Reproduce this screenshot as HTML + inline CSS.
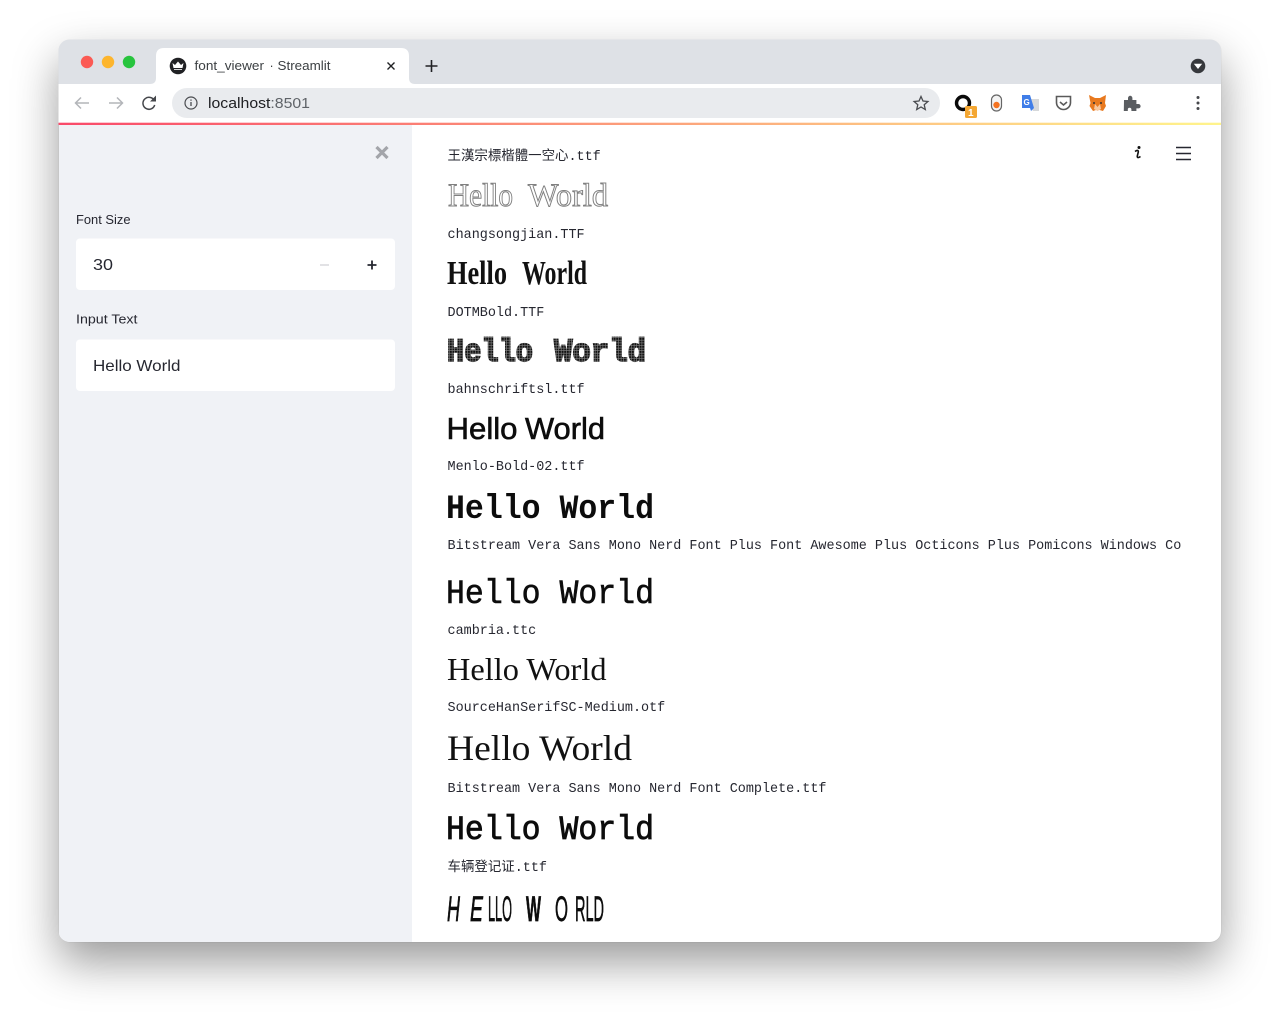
<!DOCTYPE html>
<html><head><meta charset="utf-8"><style>
html,body{margin:0;padding:0;background:#fff;width:1280px;height:1020px;overflow:hidden}
#w{position:absolute;left:58.5px;top:39.5px;width:1162.5px;height:902.5px;border-radius:11px;background:#fff;box-shadow:0 20px 45px rgba(0,0,0,.4),0 0 1px rgba(0,0,0,.2);overflow:hidden}
#s{position:absolute;left:0;top:0}
.m{font-family:"Liberation Mono","Noto Sans CJK SC",monospace;font-size:13.44px;fill:#262730}
.f{font-family:"Liberation Sans",sans-serif;fill:#262730}
.c{font-family:"Liberation Mono",monospace;fill:#0c0c0c}
.r{font-family:"Liberation Serif",serif;fill:#111}
.o{fill:#fff;stroke:#808080;stroke-width:1}
.n{stroke:#0c0c0c;stroke-width:.7;fill:#0c0c0c}
.d{fill:url(#dots);stroke:url(#dots);stroke-width:1.700}
.p{stroke:#0c0c0c;stroke-width:.6;fill:#0c0c0c}
</style></head><body>
<div id="w"></div>
<svg id="s" width="1280" height="1020" viewBox="0 0 1280 1020">
<defs>
<clipPath id="cw"><rect x="58.5" y="39.5" width="1162.5" height="902.5" rx="11"/></clipPath>
<linearGradient id="g"><stop offset="0" stop-color="#f94a6a"/><stop offset="1" stop-color="#fff48c"/></linearGradient>
<pattern id="dots" width="2.6" height="2.6" patternUnits="userSpaceOnUse"><rect width="2.6" height="2.6" fill="#111"/><rect x="2" width=".6" height="2.6" fill="#888"/><rect y="2" width="2.6" height=".6" fill="#888"/></pattern>
</defs>
<g clip-path="url(#cw)">
<rect x="58" y="39" width="1164" height="45" fill="#dee1e6"/>
<rect x="58" y="84" width="1164" height="39" fill="#fff"/>
<rect x="58" y="122.700" width="1164" height="2.300" fill="url(#g)"/>
<rect x="59" y="125" width="353" height="817" fill="#f0f2f6"/>
</g>
<circle cx="87" cy="62" r="6.200" fill="#fb5a54"/><circle cx="108" cy="62" r="6.200" fill="#fdb52d"/><circle cx="129" cy="62" r="6.200" fill="#27c43e"/>
<path d="M150 84c4 0 6-2 6-6V56q0-8 8-8h237q8 0 8 8v22c0 4 2 6 6 6z" fill="#fff"/>
<circle cx="178" cy="66" r="8.300" fill="#202124"/><path d="M172.500 63l2.500 2 3-3.500 3 3.500 2.500-2-1 5h-9z" fill="#fff"/><path d="M174 69.500h8" stroke="#fff" stroke-width=".8"/>
<text y="70" class="f" font-size="12.500" style="fill:#3c4043"><tspan x="194.500" textLength="69.500" lengthAdjust="spacingAndGlyphs">font_viewer</tspan><tspan x="269.500">·</tspan><tspan x="277.500" textLength="53" lengthAdjust="spacingAndGlyphs">Streamlit</tspan></text>
<path d="M387.500 62.500l7 7m0-7l-7 7" stroke="#202124" stroke-width="1.400" fill="none"/>
<path d="M431.500 60v12M425.500 66h12" stroke="#202124" stroke-width="1.600" fill="none"/>
<circle cx="1198" cy="66" r="7.300" fill="#36383c"/><path d="M1193.800 63.800h8.400l-4.200 5.200z" fill="#fff"/>
<path d="M89 103H76M81 97.500L75.500 103l5.500 5.500" stroke="#b3b5b9" stroke-width="1.500" fill="none"/>
<path d="M109 103h13M117 97.500l5.500 5.500-5.500 5.500" stroke="#b3b5b9" stroke-width="1.500" fill="none"/>
<path d="M154.500 101a6 6 0 1 0 .2 4" stroke="#45474b" stroke-width="1.500" fill="none"/><path d="M156 95.500v6h-6z" fill="#45474b"/>
<rect x="172" y="88" width="768" height="30" rx="15" fill="#e9ebee"/>
<circle cx="191" cy="103" r="6" stroke="#4a4c50" stroke-width="1.200" fill="none"/><path d="M191 102v4M191 99.500v1.200" stroke="#4a4c50" stroke-width="1.300"/>
<text x="208" y="108" class="f" font-size="14.500" textLength="102" lengthAdjust="spacingAndGlyphs" style="fill:#202124">localhost<tspan style="fill:#5f6368">:8501</tspan></text>
<path d="M921 96.500l2 4.500 4.900.5-3.700 3.200 1.100 4.800-4.300-2.500-4.300 2.500 1.100-4.800-3.700-3.200 4.900-.5z" stroke="#4a4c50" stroke-width="1.300" fill="none"/>
<circle cx="963" cy="103" r="6.500" stroke="#0a0a0a" stroke-width="3.400" fill="none"/>
<rect x="965" y="106" width="12" height="12" rx="1.500" fill="#f4a733"/><text x="968" y="116" class="f" font-size="10" font-weight="700" style="fill:#fff">1</text>
<rect x="991.500" y="95" width="10" height="16" rx="5" stroke="#666" stroke-width="1.200" fill="#f4f4f4"/><circle cx="996.500" cy="105" r="3.200" fill="#f47321"/>
<path d="M1030 99h9v12h-6l-2-3z" fill="#d6d8da"/><path d="M1022 95h8l4 13-3 3-1-3h-8z" fill="#3f7de8"/><text x="1023.500" y="105" class="f" font-size="8" font-weight="700" style="fill:#fff">G</text>
<path d="M1056.500 96.500h14v6a7 7 0 0 1-14 0z" stroke="#5a5a5a" stroke-width="1.600" fill="none"/><path d="M1060 102l3.500 3 3.500-3" stroke="#5a5a5a" stroke-width="1.600" fill="none"/>
<path d="M1089 95l6 3h5l6-3-1 8 1 3-3 5-3.500-1h-3.500l-3 1-3.500-5 1-3z" fill="#e8791f"/><path d="M1095 104l2.500 3 2.500-3 1 5-3.500 2-3.500-2z" fill="#f7c8a0"/><circle cx="1094" cy="103" r="1" fill="#333"/><circle cx="1101" cy="103" r="1" fill="#333"/>
<path d="M1124 100h4v-2a2.200 2.200 0 0 1 4.400 0v2h4v4h2a2.200 2.200 0 0 1 0 4.400h-2v2.600h-5v-1.500a1.800 1.800 0 0 0-3.600 0v1.500h-4z" fill="#5a5d61"/>
<circle cx="1198" cy="97.500" r="1.500" fill="#45474b"/><circle cx="1198" cy="103" r="1.500" fill="#45474b"/><circle cx="1198" cy="108.500" r="1.500" fill="#45474b"/>

<path d="M376.500 147l11 11m0-11l-11 11" stroke="#a3a5aa" stroke-width="3.200"/>
<text x="76" y="224" class="f" font-size="13" textLength="54.500" lengthAdjust="spacingAndGlyphs">Font Size</text>
<rect x="76" y="238.500" width="319" height="51.500" rx="4" fill="#fff"/>
<text x="93" y="270" class="f" font-size="16" textLength="20" lengthAdjust="spacingAndGlyphs">30</text>
<path d="M320 265h9" stroke="#d8d9dc" stroke-width="1.500"/>
<path d="M367.500 265h9M372 260.500v9" stroke="#262730" stroke-width="1.800"/>
<text x="76" y="323.500" class="f" font-size="13" textLength="61.500" lengthAdjust="spacingAndGlyphs">Input Text</text>
<rect x="76" y="339.500" width="319" height="51.500" rx="4" fill="#fff"/>
<text x="93" y="371" class="f" font-size="16" textLength="87.500" lengthAdjust="spacingAndGlyphs">Hello World</text>

<circle cx="1139" cy="147.500" r="1.500" fill="#111"/><path d="M1135 151.500c2-1.500 3.500-1.500 3.300.5l-1 4c-.3 2 1.200 2 3.200.5" stroke="#111" stroke-width="1.600" fill="none"/>
<path d="M1176 147.500h15M1176 153.500h15M1176 159.500h15" stroke="#262730" stroke-width="1.600"/>

<text x="447.500" y="160" class="m">王漢宗標楷體一空心.ttf</text>
<text x="448" y="206" class="r o" font-size="33" textLength="65" lengthAdjust="spacingAndGlyphs">Hello</text>
<text x="528" y="206" class="r o" font-size="33" textLength="80" lengthAdjust="spacingAndGlyphs">World</text>
<text x="447.500" y="238" class="m">changsongjian.TTF</text>
<text x="447" y="284" class="r" font-size="34" font-weight="700" textLength="60" lengthAdjust="spacingAndGlyphs">Hello</text>
<text x="522" y="284" class="r" font-size="34" font-weight="700" textLength="65" lengthAdjust="spacingAndGlyphs">World</text>
<text x="447.500" y="316" class="m">DOTMBold.TTF</text>
<text x="447" y="361" class="c d" font-size="32" font-weight="700" textLength="86" lengthAdjust="spacingAndGlyphs">Hello</text>
<text x="554" y="361" class="c d" font-size="32" font-weight="700" textLength="92" lengthAdjust="spacingAndGlyphs">World</text>
<text x="447.500" y="393" class="m">bahnschriftsl.ttf</text>
<text x="446.500" y="439" class="f p" font-size="30.500" textLength="71" lengthAdjust="spacingAndGlyphs">Hello</text>
<text x="525" y="439" class="f p" font-size="30.500" textLength="80" lengthAdjust="spacingAndGlyphs">World</text>
<text x="447.500" y="470" class="m">Menlo-Bold-02.ttf</text>
<text x="446" y="518" class="c" font-size="34" font-weight="700" textLength="208" lengthAdjust="spacingAndGlyphs">Hello World</text>
<text x="447.500" y="549" class="m">Bitstream Vera Sans Mono Nerd Font Plus Font Awesome Plus Octicons Plus Pomicons Windows Co</text>
<text x="446" y="603" class="c p" font-size="34" textLength="208" lengthAdjust="spacingAndGlyphs">Hello World</text>
<text x="447.500" y="634" class="m">cambria.ttc</text>
<text x="447" y="680" class="r" font-size="32" textLength="159.500" lengthAdjust="spacingAndGlyphs">Hello World</text>
<text x="447.500" y="711" class="m">SourceHanSerifSC-Medium.otf</text>
<text x="447" y="760" class="r" font-size="35.500" textLength="185" lengthAdjust="spacingAndGlyphs">Hello World</text>
<text x="447.500" y="792" class="m">Bitstream Vera Sans Mono Nerd Font Complete.ttf</text>
<text x="446" y="839" class="c p" font-size="34" textLength="208" lengthAdjust="spacingAndGlyphs" style="stroke-width:.8">Hello World</text>
<text x="447.500" y="871" class="m">车辆登记证.ttf</text>
<text x="447" y="921" class="f n" font-size="35" font-style="italic" textLength="13" lengthAdjust="spacingAndGlyphs">H</text>
<text x="470" y="921" class="f n" font-size="35" font-style="italic" textLength="13" lengthAdjust="spacingAndGlyphs">E</text>
<text x="488" y="921" class="f n" font-size="35" textLength="24" lengthAdjust="spacingAndGlyphs">LLO</text>
<text x="526" y="921" class="f n" font-size="35" font-weight="700" textLength="15" lengthAdjust="spacingAndGlyphs">W</text>
<text x="555" y="921" class="f n" font-size="35" textLength="13" lengthAdjust="spacingAndGlyphs">O</text>
<text x="575" y="921" class="f n" font-size="35" textLength="29" lengthAdjust="spacingAndGlyphs">RLD</text>
</svg>
</body></html>
